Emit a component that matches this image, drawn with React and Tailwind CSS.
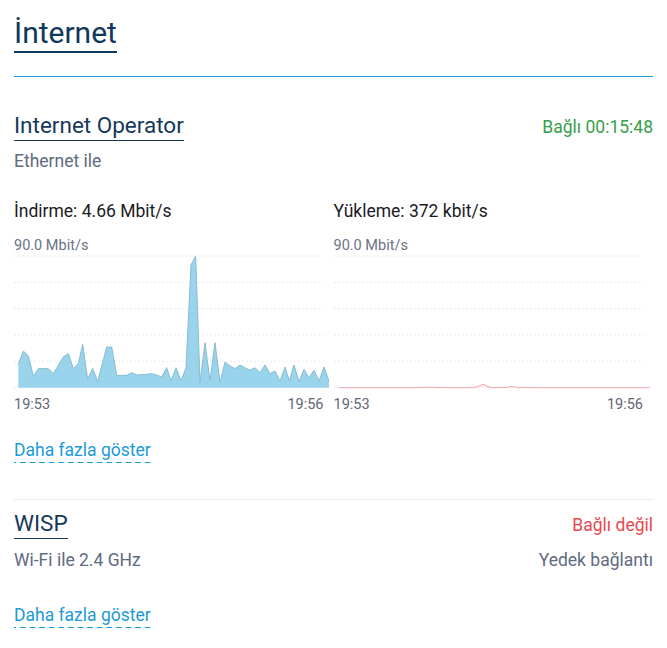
const font = { fontFamily: 'Roboto, "Noto Sans", sans-serif' };

// download samples, read off the reference (x, y in px inside the chart box)
const down = [
  [55, 370], [70, 330], [85, 345], [100, 405], [115, 383], [145, 383], [160, 398], [190, 348],
  [205, 338], [220, 383], [235, 368], [248, 310], [263, 415], [278, 382], [293, 422], [320, 318],
  [335, 318], [350, 403], [380, 403], [395, 395], [410, 402], [440, 400], [455, 398], [470, 402],
  [485, 408], [500, 380], [513, 420], [528, 380], [543, 420], [558, 380], [573, 72], [587, 45],
  [600, 425], [615, 305], [630, 420], [645, 305], [660, 425], [675, 363], [690, 375], [705, 383],
  [720, 372], [735, 380], [750, 388], [765, 380], [780, 395], [795, 372], [810, 398], [825, 390],
  [840, 420], [855, 378], [868, 420], [882, 372], [897, 422], [912, 385], [927, 410], [942, 388],
  [957, 420], [972, 378], [987, 420],
].map(([x, y]) => [x / 3 - 14, y / 3 - 13]);

const up = [
  [5, 133.7], [80, 133.7], [95, 133.2], [110, 133.7], [140, 133.7], [145, 132], [149, 130.2],
  [153, 132], [158, 133.7], [172, 133.4], [178, 132.6], [184, 133.4], [200, 133.7], [316, 133.7],
];

const BASE = 133.7;
const GRID = [2, 28.3, 54.6, 81, 107.3, 133.7];

function Chart({ points, fill, stroke }) {
  const line = points.map(([x, y]) => `${x},${y}`).join(' ');
  const area = `${points[0][0]},${BASE} ${line} ${points[points.length - 1][0]},${BASE}`;
  return (
    <svg width="100%" height="136" viewBox="0 0 319.5 136" className="block overflow-visible -mt-[2px]">
      {GRID.map((y) => (
        <line key={y} x1="0" x2="309.5" y1={y} y2={y} stroke="#e9eaed" strokeWidth="1" strokeDasharray="2 2" />
      ))}
      <polygon points={area} fill={fill} />
      <polyline points={line} fill="none" stroke={stroke} strokeWidth="1" strokeLinejoin="round" />
    </svg>
  );
}

function MoreLink() {
  return (
    <a className="inline-block text-[17.5px] leading-[24px] text-[#1c9ad6] bg-[linear-gradient(to_right,#1c9ad6_60%,transparent_0)] bg-[length:9.6px_1px] bg-repeat-x bg-bottom pb-px cursor-pointer">
      Daha fazla göster
    </a>
  );
}

function SpeedColumn({ label, points, fill, stroke }) {
  return (
    <div className="flex flex-col">
      <div className="text-[17.5px] leading-[24px] text-[#1b1b1f]">{label}</div>
      <div className="mt-[12.5px] text-[14.5px] leading-[20px] text-[#6b7386]">90.0 Mbit/s</div>
      <Chart points={points} fill={fill} stroke={stroke} />
      <div className="mt-[5px] pr-[10px] flex justify-between text-[14.5px] leading-[20px] text-[#5f6679]">
        <span>19:53</span>
        <span>19:56</span>
      </div>
    </div>
  );
}

export default function App() {
  return (
    <div className="min-h-screen bg-white px-[14px] pt-[15px]" style={font}>
      <h1 className="inline-block text-[30px] leading-[36px] font-normal text-[#10385a] border-b-2 border-[#0b3a5e]">
        İnternet
      </h1>
      <div className="mt-[23px] h-px bg-[#1ca0dc]" />

      {/* Internet Operator */}
      <section className="mt-[33px]">
        <div className="flex items-baseline justify-between">
          <h2 className="inline-block text-[22.5px] leading-[30px] text-[#15385a] border-b border-[#15385a]">
            Internet Operator
          </h2>
          <span className="text-[17.5px] text-[#36a04a]">Bağlı 00:15:48</span>
        </div>
        <div className="mt-[8px] text-[17.5px] leading-[24px] text-[#606a80]">Ethernet ile</div>

        <div className="mt-[26px] grid grid-cols-2">
          <SpeedColumn label="İndirme: 4.66 Mbit/s" points={down} fill="#9ad4ec" stroke="#86bcd4" />
          <SpeedColumn label="Yükleme: 372 kbit/s" points={up} fill="#fdecee" stroke="#f5a6ae" />
        </div>

        <div className="mt-[23px]">
          <MoreLink />
        </div>
      </section>

      <div className="mt-[36px] h-px bg-[#e8e9ec]" />

      {/* WISP */}
      <section className="mt-[8px]">
        <div className="flex items-baseline justify-between">
          <h2 className="inline-block text-[22.5px] leading-[30px] text-[#15385a] border-b border-[#15385a]">
            WISP
          </h2>
          <span className="text-[17.5px] text-[#e8474f]">Bağlı değil</span>
        </div>
        <div className="mt-[9.5px] flex justify-between text-[17.5px] leading-[24px] text-[#606a80]">
          <span>Wi-Fi ile 2.4 GHz</span>
          <span>Yedek bağlantı</span>
        </div>
        <div className="mt-[31px]">
          <MoreLink />
        </div>
      </section>
    </div>
  );
}
